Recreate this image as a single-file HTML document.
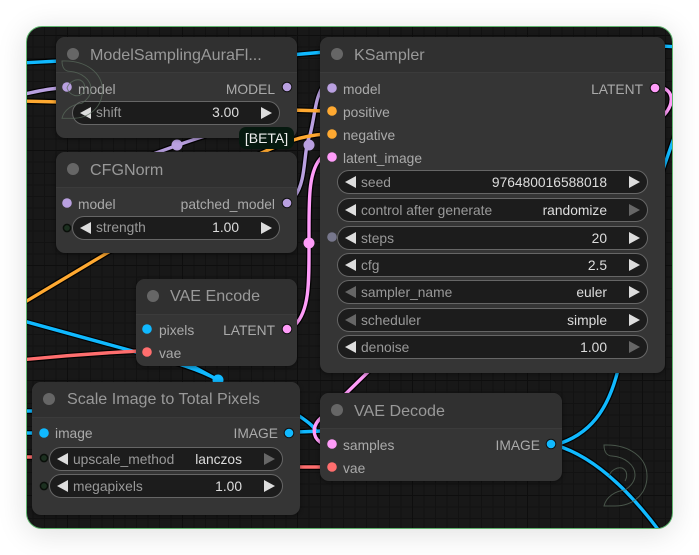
<!DOCTYPE html>
<html><head><meta charset="utf-8">
<style>
html,body{margin:0;padding:0;background:#fff;width:699px;height:555px;overflow:hidden}
body{font-family:"Liberation Sans",sans-serif;position:relative}
#a{position:absolute;left:0;top:0;width:699px;height:555px;filter:blur(.35px)}
#c{position:absolute;left:26px;top:26px;width:645px;height:501px;border:1px solid #5fb56e;border-radius:16px;overflow:hidden;background-color:#181818;
background-image:linear-gradient(#0e0e0e 1px,transparent 1px),linear-gradient(90deg,#0e0e0e 1px,transparent 1px),linear-gradient(#121212 1px,transparent 1px),linear-gradient(90deg,#121212 1px,transparent 1px);
background-size:115px 115px,115px 115px,11.5px 11.5px,11.5px 11.5px;background-position:0 8px,40px 0,0 8px,40px 0}
#s{position:absolute;left:26px;top:26px;width:647px;height:503px;border-radius:16px;box-shadow:0 4px 30px rgba(0,0,0,.13)}
svg{position:absolute;left:0;top:0}
.n{position:absolute;background:#353535;border-radius:9px;box-shadow:0 1px 4px rgba(0,0,0,.45)}
.h{position:absolute;left:0;right:0;top:0;height:35px;background:#303030;border-radius:9px 9px 0 0;border-bottom:1px solid #3b3b3b}
.d{position:absolute;width:12px;height:12px;border-radius:50%;background:#666;left:11px;top:11px}
.ti{position:absolute;left:34px;top:7px;line-height:22px;font-size:16.1px;color:#999;white-space:nowrap}
.t{position:absolute;font-size:13.8px;line-height:20px;height:20px;color:#aaa;white-space:nowrap;margin-top:1px}
.r{text-align:right}
.w{position:absolute;height:22px;border:1px solid #666;border-radius:12px;background:#1c1c1c}
.w i{position:absolute;top:5px;width:0;height:0;border-top:6px solid transparent;border-bottom:6px solid transparent}
.w i.l{left:7px;border-right:11px solid #ddd}
.w i.g{right:7px;border-left:11px solid #ddd}
.w i.l.o{border-right-color:#666}
.w i.g.o{border-left-color:#666}
.w b{position:absolute;left:23px;top:1px;font-weight:normal;font-size:13.8px;line-height:20px;color:#999;white-space:nowrap}
.w u{position:absolute;right:40px;top:1px;text-decoration:none;font-size:13.8px;line-height:20px;color:#ddd;white-space:nowrap}
.k b,.k u{top:2px}
#beta{position:absolute;left:239px;top:127px;width:55px;height:22px;background:#06190f;border-radius:7px;color:#eee;font-size:14px;line-height:22px;text-align:center}
</style></head><body>
<div id="a">
<div id="s"></div>
<div id="c"></div>
<svg width="699" height="555" viewBox="0 0 699 555">
<defs><clipPath id="cp"><rect x="27" y="27" width="645" height="501" rx="15"/></clipPath></defs>
<g clip-path="url(#cp)" fill="none" stroke-linecap="round">
<g stroke="#000" stroke-width="6" opacity=".85">
<path d="M20 63L60 61M290 55L325 52M660 46L680 47M20 95C35 92 45 89 60 88M20 101L60 102M290 110L325 111M255 156C285 142 300 136 325 134M150 155C165 150 185 142 205 136M295 196C307 180 303 150 310 135C315 115 315 100 322 88M295 325C310 310 309 280 309 240C309 200 308 170 322 157M20 305L112 250M20 320L136 352C165 360 195 367 218 380M185 362L218 380M20 360C60 356 100 353 140 351M20 411L36 411M20 433L36 433M20 457L36 457M295 413C305 420 313 425 316 431M298 432L322 431M320 442C312 436 312 425 322 417L370 370M298 467L325 467M555 445C590 435 608 410 618 370M555 445C590 455 625 485 660 532M660 178L675 135M663 88C674 92 674 105 663 116"/>
</g>
<g stroke-width="3.4">
<path stroke="#10b9ff" d="M20 63L60 61M290 55L325 52M660 46L680 47M20 320L136 352C165 360 195 367 218 380M185 362L218 380M20 411L36 411M20 433L36 433M295 413C305 420 313 425 316 431M298 432L322 431M555 445C590 435 608 410 618 370M555 445C590 455 625 485 660 532M660 178L675 135"/>
<path stroke="#b9a0e0" d="M20 95C35 92 45 89 60 88M150 155C165 150 185 142 205 136M295 196C307 180 303 150 310 135C315 115 315 100 322 88"/>
<path stroke="#ffa931" d="M20 101L60 102M290 110L325 111M255 156C285 142 300 136 325 134M20 305L112 250"/>
<path stroke="#ff9cf9" d="M295 325C310 310 309 280 309 240C309 200 308 170 322 157M320 442C312 436 312 425 322 417L370 370M663 88C674 92 674 105 663 116"/>
<path stroke="#ff6e6e" d="M20 360C60 356 100 353 140 351M20 457L36 457M298 467L325 467"/>
</g>
</g>
<circle cx="177" cy="145" r="5.5" fill="#b9a0e0"/>
<circle cx="309" cy="145" r="5.5" fill="#b9a0e0"/>
<circle cx="309" cy="243" r="5.5" fill="#ff9cf9"/>
<circle cx="218" cy="380" r="5.5" fill="#10b9ff"/>
</svg>

<div class="n" style="left:56px;top:37px;width:241px;height:101px"><div class="h"></div><div class="d"></div><div class="ti">ModelSamplingAuraFl...</div>
<div class="t" style="left:22px;top:42px">model</div><div class="t r" style="right:22px;top:42px">MODEL</div>
<div class="w" style="left:16px;top:64px;width:206px"><i class="l"></i><b>shift</b><u>3.00</u><i class="g"></i></div></div>

<div class="n" style="left:56px;top:152px;width:241px;height:101px"><div class="h"></div><div class="d"></div><div class="ti">CFGNorm</div>
<div class="t" style="left:22px;top:42px">model</div><div class="t r" style="right:22px;top:42px">patched_model</div>
<div class="w" style="left:16px;top:64px;width:206px"><i class="l"></i><b>strength</b><u>1.00</u><i class="g"></i></div></div>

<div class="n k" style="left:320px;top:37px;width:345px;height:336px"><div class="h"></div><div class="d"></div><div class="ti">KSampler</div>
<div class="t" style="left:23px;top:42px">model</div><div class="t r" style="right:22px;top:42px">LATENT</div>
<div class="t" style="left:23px;top:65px">positive</div>
<div class="t" style="left:23px;top:88px">negative</div>
<div class="t" style="left:23px;top:111px">latent_image</div>
<div class="w" style="left:17px;top:133px;width:309px"><i class="l"></i><b>seed</b><u>976480016588018</u><i class="g"></i></div>
<div class="w" style="left:17px;top:161px;width:309px"><i class="l"></i><b>control after generate</b><u>randomize</u><i class="g o"></i></div>
<div class="w" style="left:17px;top:189px;width:309px"><i class="l"></i><b>steps</b><u>20</u><i class="g"></i></div>
<div class="w" style="left:17px;top:216px;width:309px"><i class="l"></i><b>cfg</b><u>2.5</u><i class="g"></i></div>
<div class="w" style="left:17px;top:243px;width:309px"><i class="l o"></i><b>sampler_name</b><u>euler</u><i class="g"></i></div>
<div class="w" style="left:17px;top:271px;width:309px"><i class="l o"></i><b>scheduler</b><u>simple</u><i class="g"></i></div>
<div class="w" style="left:17px;top:298px;width:309px"><i class="l"></i><b>denoise</b><u>1.00</u><i class="g o"></i></div></div>

<div class="n" style="left:136px;top:279px;width:161px;height:87px"><div class="h"></div><div class="d"></div><div class="ti" style="top:6px">VAE Encode</div>
<div class="t" style="left:23px;top:41px">pixels</div><div class="t r" style="right:22px;top:41px">LATENT</div>
<div class="t" style="left:23px;top:64px">vae</div></div>

<div class="n k" style="left:32px;top:382px;width:268px;height:133px"><div class="h"></div><div class="d"></div><div class="ti" style="left:35px;top:6px">Scale Image to Total Pixels</div>
<div class="t" style="left:23px;top:41px">image</div><div class="t r" style="right:22px;top:41px">IMAGE</div>
<div class="w" style="left:17px;top:65px;width:232px"><i class="l"></i><b>upscale_method</b><u>lanczos</u><i class="g o"></i></div>
<div class="w" style="left:17px;top:92px;width:232px"><i class="l"></i><b>megapixels</b><u>1.00</u><i class="g"></i></div></div>

<div class="n" style="left:320px;top:393px;width:242px;height:88px"><div class="h"></div><div class="d"></div><div class="ti">VAE Decode</div>
<div class="t" style="left:23px;top:42px">samples</div><div class="t r" style="right:22px;top:42px">IMAGE</div>
<div class="t" style="left:23px;top:65px">vae</div></div>

<div id="beta">[BETA]</div>

<svg width="699" height="555" viewBox="0 0 699 555">
<g fill="#b9a0e0"><circle cx="67" cy="87" r="4.8"/><circle cx="67" cy="203" r="4.8"/><circle cx="332" cy="88" r="4.8"/></g>
<g fill="#b9a0e0" stroke="#111"><circle cx="287" cy="87" r="4.8"/><circle cx="287" cy="203" r="4.8"/></g>
<g fill="#ffa931"><circle cx="332" cy="111" r="4.8"/><circle cx="332" cy="134" r="4.8"/></g>
<circle cx="332" cy="157" r="4.8" fill="#ff9cf9"/><circle cx="332" cy="444" r="4.8" fill="#ff9cf9"/>
<circle cx="655" cy="88" r="4.8" fill="#ff9cf9" stroke="#111"/><circle cx="287" cy="329" r="4.8" fill="#ff9cf9" stroke="#111"/>
<circle cx="332" cy="237" r="4.8" fill="#77778c"/>
<circle cx="147" cy="329" r="4.8" fill="#10b9ff"/><circle cx="44" cy="433" r="4.8" fill="#10b9ff"/>
<circle cx="289" cy="433" r="4.8" fill="#10b9ff" stroke="#111"/><circle cx="551" cy="444" r="4.8" fill="#10b9ff" stroke="#111"/>
<circle cx="147" cy="352" r="4.8" fill="#ff6e6e"/><circle cx="332" cy="467" r="4.8" fill="#ff6e6e"/>
<g fill="#1c3020" stroke="#0a0f0a" stroke-width="1.5"><circle cx="67" cy="228" r="3.6"/><circle cx="44" cy="458" r="3.6"/><circle cx="44" cy="486" r="3.6"/></g>
<g fill="none" stroke="#5a6b5c" stroke-width="1" opacity=".75">
<path d="M604 445C630 444 647 458 647 476C647 495 632 506 615 506H604C606 497 615 491 625 490C631 486 635 481 635 475C635 465 625 457 612 456C607 456 604 452 604 445Z"/>
<path d="M609 476C611 470 617 467 622 468C627 470 628 476 625 481"/>
<path transform="translate(-542 -384) translate(604 445) scale(.94) translate(-604 -445)" d="M604 445C630 444 647 458 647 476C647 495 632 506 615 506H604C606 497 615 491 625 490C631 486 635 481 635 475C635 465 625 457 612 456C607 456 604 452 604 445Z"/>
<path transform="translate(-542 -384)" d="M609 472C611 466 617 463 622 464C627 466 628 472 625 477C620 482 612 480 609 472Z"/>
</g>
</svg>
</div>
</body></html>
